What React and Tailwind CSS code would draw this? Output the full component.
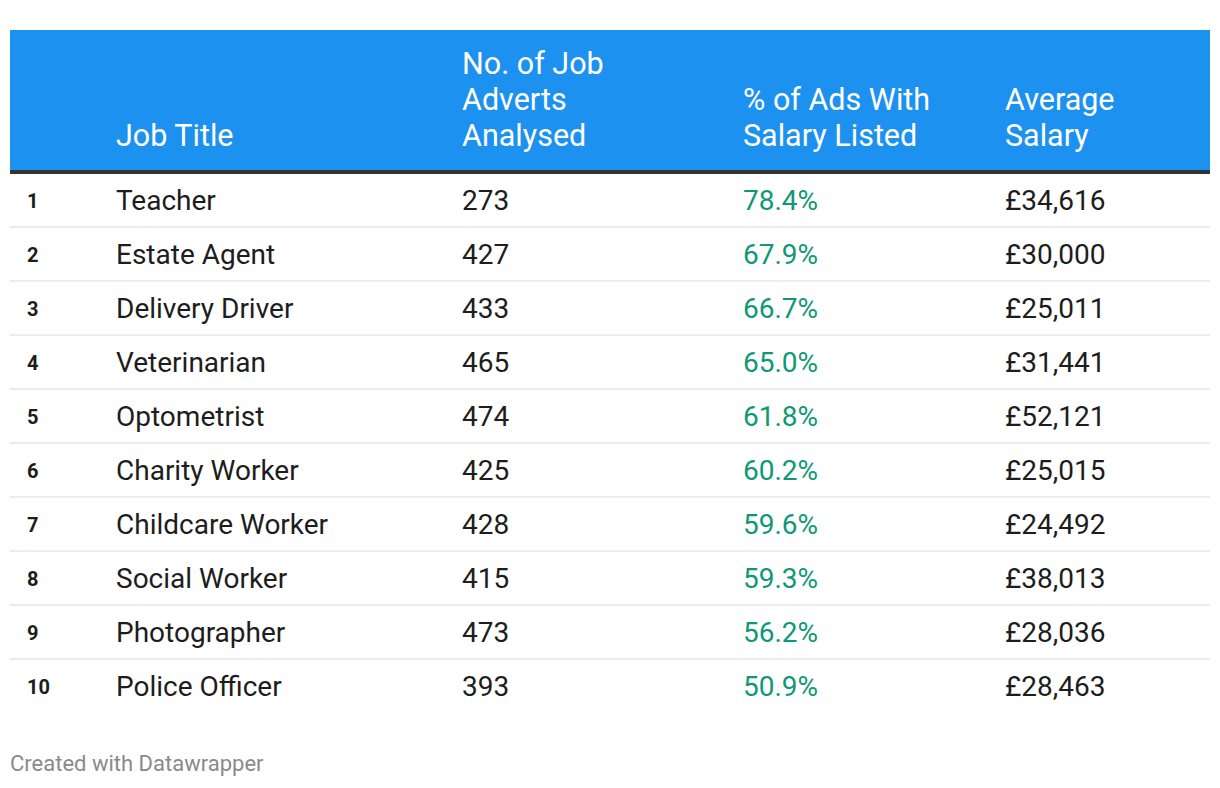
import React from "react";

const rows = [
  ["1", "Teacher", "273", "78.4%", "£34,616"],
  ["2", "Estate Agent", "427", "67.9%", "£30,000"],
  ["3", "Delivery Driver", "433", "66.7%", "£25,011"],
  ["4", "Veterinarian", "465", "65.0%", "£31,441"],
  ["5", "Optometrist", "474", "61.8%", "£52,121"],
  ["6", "Charity Worker", "425", "60.2%", "£25,015"],
  ["7", "Childcare Worker", "428", "59.6%", "£24,492"],
  ["8", "Social Worker", "415", "59.3%", "£38,013"],
  ["9", "Photographer", "473", "56.2%", "£28,036"],
  ["10", "Police Officer", "393", "50.9%", "£28,463"],
];

const cols = "grid grid-cols-[89px_346px_281px_262px_1fr]";

export default function App() {
  return (
    <div className="w-[1220px] h-[788px] bg-white pt-[30px] px-[10px]" style={{ fontFamily: "Roboto, 'Liberation Sans', sans-serif" }}>
      <div className="w-[1200px]">
        <div className={`${cols} bg-[#1d91f0] text-white text-[30.5px] leading-[36px] pt-[16px] pb-[16px] border-b-[4px] border-[#333333]`}>
          <div></div>
          <div className="pl-[17px] self-end">Job Title</div>
          <div className="pl-[17px] self-end">No. of Job<br />Adverts<br />Analysed</div>
          <div className="pl-[17px] self-end">% of Ads With<br />Salary Listed</div>
          <div className="pl-[17px] self-end">Average<br />Salary</div>
        </div>
        {rows.map((r, i) => (
          <div key={i} className={`${cols} h-[54px] items-center text-[28px] text-[#1d1d1d] ${i < rows.length - 1 ? "pt-[2px] border-b-2 border-[#ececec]" : ""}`}>
            <div className="pl-[17px] text-[20px] font-bold text-[#1d1d1d]">{r[0]}</div>
            <div className="pl-[17px]">{r[1]}</div>
            <div className="pl-[17px]">{r[2]}</div>
            <div className="pl-[17px] text-[#0e9876]">{r[3]}</div>
            <div className="pl-[17px]">{r[4]}</div>
          </div>
        ))}
        <div className="mt-[38px] text-[22px] text-[#8a8a8a] leading-[24px]">Created with Datawrapper</div>
      </div>
    </div>
  );
}
